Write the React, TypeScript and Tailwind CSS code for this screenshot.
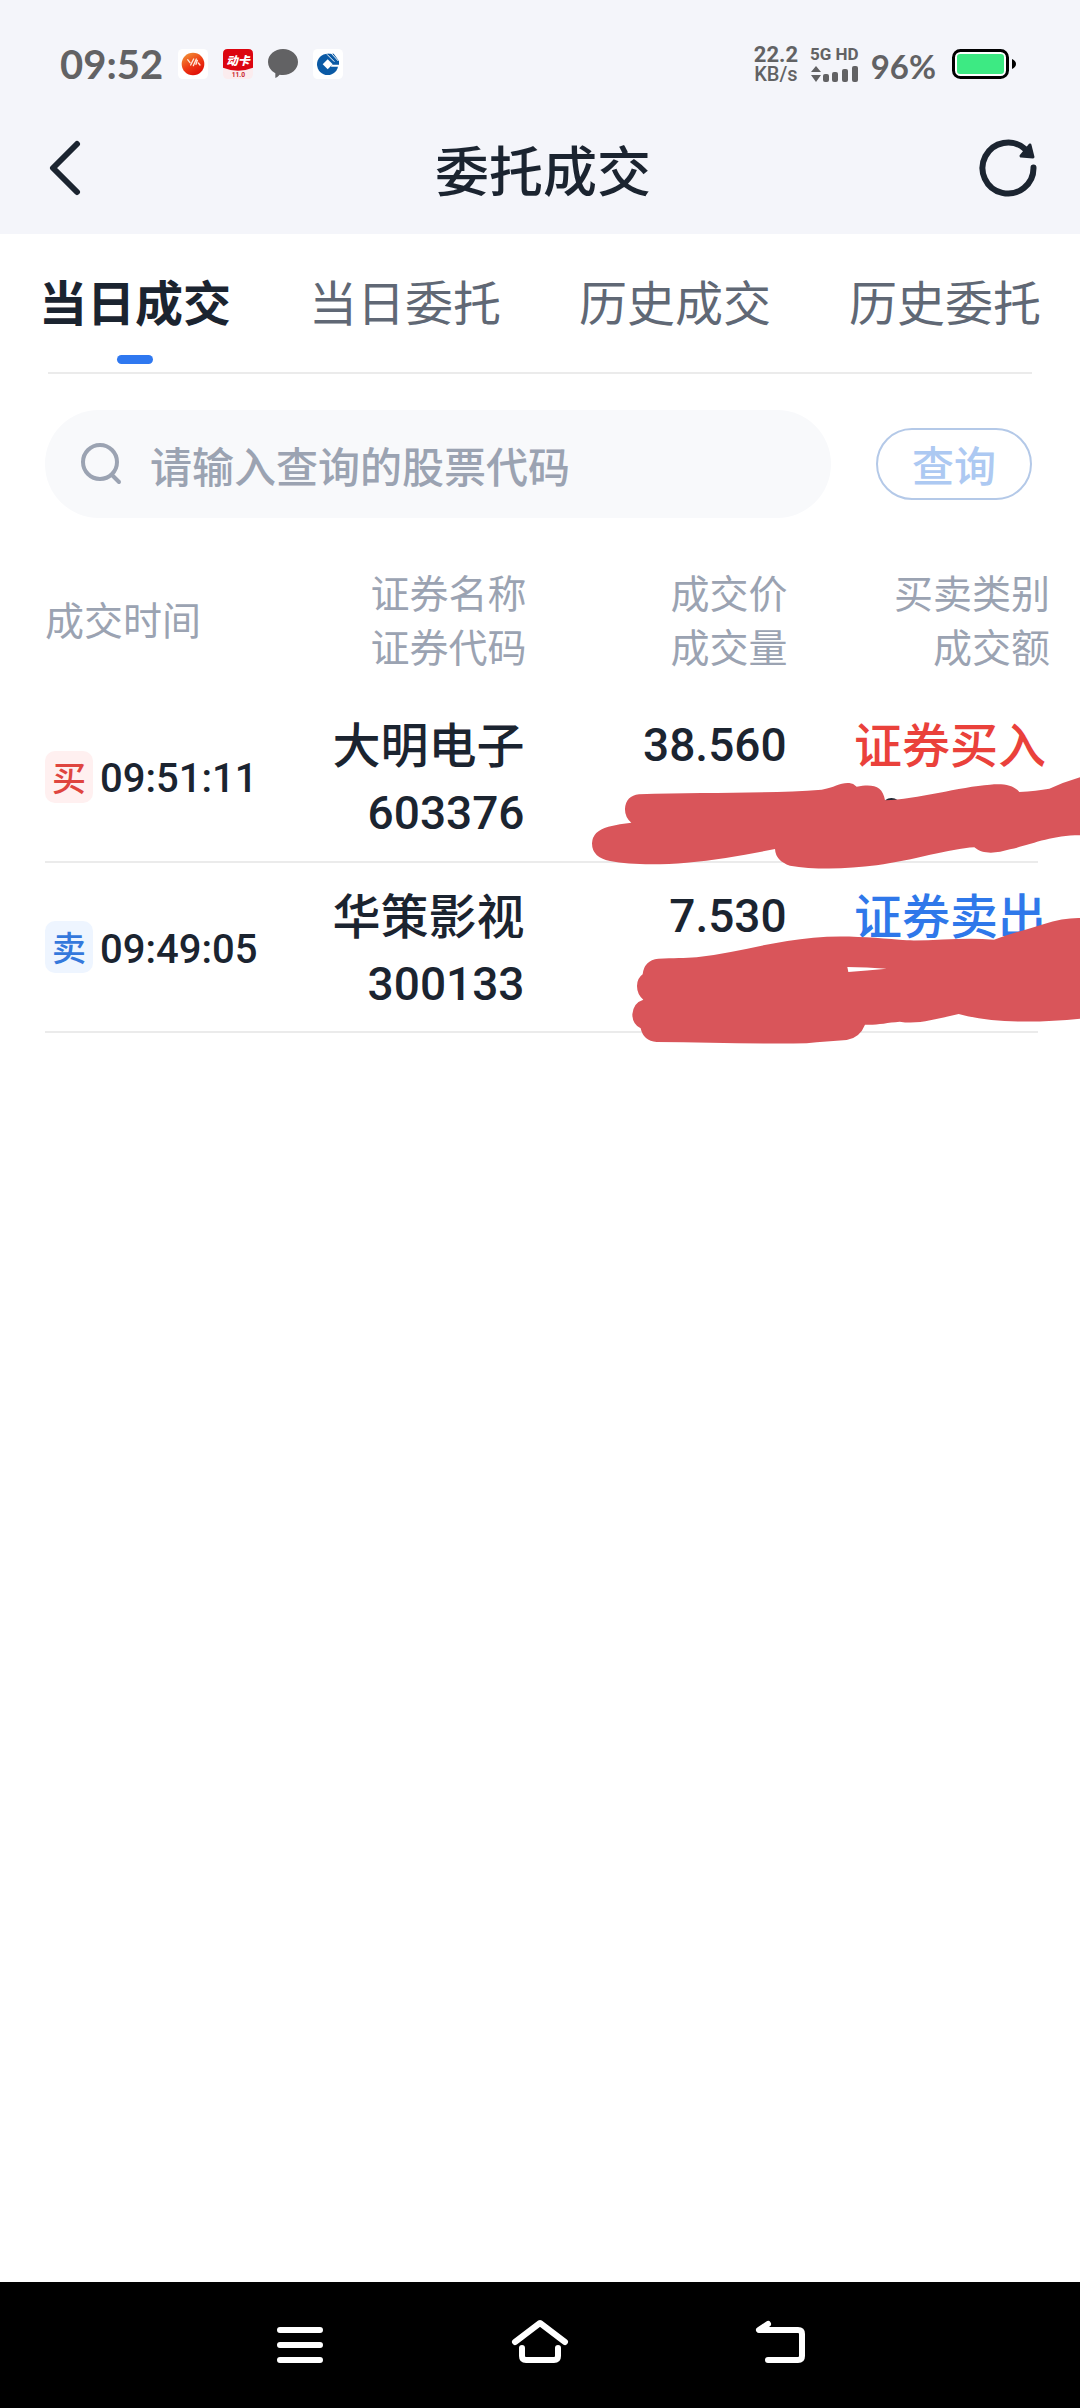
const trades = [
  { side: '买', time: '09:51:11', name: '大明电子', code: '603376', price: '38.560', type: '证券买入', badge: 'bg-[#fff0f0] text-[#df453f]', tone: 'text-[#ea413b]' },
  { side: '卖', time: '09:49:05', name: '华策影视', code: '300133', price: '7.530', type: '证券卖出', badge: 'bg-[#eef5ff] text-[#3478dc]', tone: 'text-[#2f78ea]' },
];

const tabs = ['当日成交', '当日委托', '历史成交', '历史委托'];

function StatusBar() {
  return (
    <div className="flex h-[102px] items-center justify-between pt-[26px] pr-[64px] pl-[60px] text-[#626264]">
      <div className="flex items-center gap-[15px]">
        <span className="font-[Lato] text-[40px] leading-none font-bold">09:52</span>
        <svg className="size-[30px]" viewBox="0 0 90 90">
          <defs>
            <linearGradient id="orb" x1="0" y1="0" x2="0.6" y2="1">
              <stop offset="0" stopColor="#f2a03c" />
              <stop offset="0.6" stopColor="#ee3a14" />
              <stop offset="1" stopColor="#e01008" />
            </linearGradient>
          </defs>
          <rect width="90" height="90" rx="14" fill="#fff" />
          <circle cx="45" cy="45" r="34" fill="url(#orb)" />
          <path d="M29 32l7 9M38 48l9-18M46 50l9-20M58 34l-4 12M61 42l5 6" stroke="#ffe8d8" strokeWidth="4" strokeLinecap="round" fill="none" />
        </svg>
        <svg className="size-[30px]" viewBox="0 0 90 90">
          <rect width="90" height="90" rx="14" fill="#fbecee" />
          <path d="M14 0H76Q90 0 90 14V56Q45 74 0 56V14Q0 0 14 0Z" fill="#dc0510" />
          <text x="45" y="47" textAnchor="middle" fontFamily="Noto Sans CJK SC" fontWeight="900" fontStyle="italic" fontSize="35" fill="#fff">动卡</text>
          <text x="46" y="84" textAnchor="middle" fontFamily="Roboto" fontWeight="700" fontSize="20" fill="#c8242c">11.0</text>
        </svg>
        <svg className="size-[30px]" viewBox="0 0 90 90">
          <path d="M45 0C70 0 90 17 90 39S70 78 45 78Q39 78 35 77Q29 84 22 87V73Q0 61 0 39C0 17 20 0 45 0Z" fill="#626264" />
        </svg>
        <svg className="size-[30px]" viewBox="0 0 90 90">
          <rect width="90" height="90" rx="14" fill="#fff" />
          <circle cx="44" cy="46" r="32" fill="#0b5aa5" />
          <path d="M44 14H62L78 36V48H64Z" fill="#0b5aa5" />
          <path d="M44 31L59 46L44 61L29 46Z" fill="#fff" />
          <path d="M56 47H82V53H54Z" fill="#fff" />
          <path d="M42 16L64 38M54 12L76 36" stroke="#fff" strokeWidth="3" />
        </svg>
      </div>
      <div className="flex items-center gap-[12px]">
        <div className="flex flex-col items-center font-[Roboto]">
          <span className="text-[22px] leading-[20px] font-bold">22.2</span>
          <span className="text-[20px] leading-[18px] font-medium">KB/s</span>
        </div>
        <div className="flex flex-col items-center gap-[3px]">
          <span className="font-[Roboto] text-[17px] leading-[16px] font-bold">5G HD</span>
          <svg className="h-[17px] w-[48px]" viewBox="0 0 48 17" fill="#626264">
            <path d="M6 1L11 7H1ZM6 17L1 10H11Z" />
            <rect x="13" y="9" width="6" height="8" rx="2" />
            <rect x="22" y="7" width="6" height="10" rx="2" />
            <rect x="32" y="4" width="6" height="13" rx="2" />
            <rect x="42" y="1" width="6" height="16" rx="2" />
          </svg>
        </div>
        <span className="pt-[4px] font-[Lato] text-[33px] leading-none font-bold">96%</span>
        <svg className="ml-[4px] h-[30px] w-[64px]" viewBox="0 0 64 30">
          <rect x="1.5" y="1.5" width="54" height="27" rx="7" fill="#fff" stroke="#000" strokeWidth="3" />
          <rect x="5" y="5" width="47" height="20" rx="3" fill="#3dea83" />
          <path d="M60 10Q64 12 64 15T60 20Z" fill="#000" />
        </svg>
      </div>
    </div>
  );
}

function Header() {
  return (
    <header className="flex h-[132px] items-center justify-between pr-[43px] pl-[48px] text-[#1b2430]">
      <button aria-label="返回" className="w-[59px]">
        <svg className="h-[56px] w-[34px]" viewBox="0 0 34 56" fill="none" stroke="currentColor" strokeWidth="6" strokeLinecap="round" strokeLinejoin="round">
          <path d="M29 4L5 28L29 52" />
        </svg>
      </button>
      <h1 className="pt-[2px] text-[54px] leading-none font-medium">委托成交</h1>
      <button aria-label="刷新">
        <svg className="size-[58px]" viewBox="0 0 58 58" fill="none" stroke="currentColor" strokeWidth="6" strokeLinecap="round">
          <path d="M54.5 28.5A25.5 25.5 0 1 1 46 10" />
          <path d="M42 17L54 18L51 6Z" fill="currentColor" strokeWidth="3" strokeLinejoin="round" />
        </svg>
      </button>
    </header>
  );
}

function Redactions() {
  return (
    <svg aria-hidden="true" className="pointer-events-none absolute right-0 bottom-[-18px] h-[360px] w-[520px]" viewBox="0 0 1560 1080">
      <path d="M975 328Q994 314 1014 328L994 345Z" fill="#1b2430" />
      <g fill="#d9555a">
        <path d="M237 310C420 303 620 309 785 296C825 289 840 274 868 276Q880 277 890 287C940 278 968 285 975 328C1070 325 1200 287 1290 281C1330 277 1361 282 1378 303Q1430 300 1468 293Q1510 274 1560 259V433C1470 433 1420 460 1350 475C1310 487 1270 492 1243 469C1170 473 1060 508 950 523C860 535 760 536 690 524Q647 510 645 474C560 491 470 508 380 515C300 522 210 522 150 510Q96 500 96 457Q97 420 145 407Q180 398 214 395Q194 378 195 353Q198 314 237 310Z" />
        <path fillRule="evenodd" d="M295 803C340 801 375 802 410 799C530 785 640 750 760 740C860 731 960 742 1040 748C1130 750 1210 738 1302 746C1350 728 1400 716 1450 700Q1510 680 1560 681V983C1440 995 1300 998 1196 969C1140 980 1080 1002 1019 992C980 995 950 1003 915 1001Q900 1040 860 1047C820 1050 780 1052 740 1057C590 1060 440 1053 290 1053Q250 1050 242 1012Q217 1000 217 970Q220 935 250 926Q231 910 231 885Q231 862 248 850Q252 808 295 803ZM862 828L865 843Q920 838 980 833Q920 828 862 828Z" />
      </g>
    </svg>
  );
}

export default function App() {
  return (
    <div className="flex min-h-screen flex-col overflow-x-hidden bg-white font-['Noto_Sans_CJK_SC',sans-serif] text-[#1b2430]">
      <div className="bg-[#f4f5fa]">
        <StatusBar />
        <Header />
      </div>

      <main className="grow">
        <nav className="grid grid-cols-4">
          {tabs.map((tab, i) => (
            <button key={tab} className="flex flex-col items-center pt-[30px]">
              <span className={i === 0 ? 'text-[48px] leading-[72px] font-bold' : 'text-[48px] leading-[72px] text-[#606875]'}>{tab}</span>
              {i === 0 && <span className="mt-[19px] h-[9px] w-[36px] rounded-full bg-[#2f78f0]" />}
            </button>
          ))}
        </nav>
        <div className="mx-[48px] mt-[8px] h-[2px] bg-[#ebebeb]" />

        <form className="mx-[45px] mt-[36px] flex items-center gap-[45px] pr-[3px]">
          <label className="flex h-[108px] min-w-0 grow items-center gap-[28px] rounded-full bg-[#f8f9fb] px-[35px] text-[#9ba3b2]">
            <svg className="size-[42px] shrink-0" viewBox="0 0 42 42" fill="none" stroke="currentColor" strokeWidth="4" strokeLinecap="round">
              <circle cx="20" cy="19" r="17" />
              <path d="M33 33L39 39" />
            </svg>
            <input aria-label="股票代码" placeholder="请输入查询的股票代码" className="h-[60px] min-w-0 grow bg-transparent text-[42px] font-medium outline-none placeholder:text-[#9ba3b2]" />
          </label>
          <button type="button" className="h-[72px] w-[156px] rounded-full border-2 border-[#b4c9e8] text-[42px] leading-[64px] font-medium text-[#adc9f2]">查询</button>
        </form>

        <div className="relative mt-[46px] pr-[42px] pl-[45px]">
          <table className="w-full table-fixed border-collapse">
            <colgroup>
              <col className="w-[23%]" />
              <col className="w-[27%]" />
              <col className="w-[27%]" />
              <col className="w-[23%]" />
            </colgroup>
            <thead className="text-[39px] leading-[54px] text-[#9ba3b2]">
              <tr className="h-[128px] align-top">
                <th className="pt-[27px] text-left font-normal">成交时间</th>
                <th className="pr-[15px] text-right font-normal">证券名称<br />证券代码</th>
                <th className="pr-[22px] text-right font-normal">成交价<br />成交量</th>
                <th className="text-right font-normal"><div className="mr-[-12px]">买卖类别<br />成交额</div></th>
              </tr>
            </thead>
            <tbody>
              {trades.map((t) => (
                <tr key={t.code} className="h-[170px] border-b-2 border-[#ebebeb] text-right text-[48px] leading-[69px] font-medium">
                  <td>
                    <div className="flex items-center gap-[7px]">
                      <span className={'flex h-[52px] w-[48px] shrink-0 items-center justify-center rounded-[10px] text-[34px] leading-none ' + t.badge}>{t.side}</span>
                      <span className="pt-[5px] font-[Roboto] text-[40px] leading-none">{t.time}</span>
                    </div>
                  </td>
                  <td className="pr-[17px] align-top">
                    <div className="pt-[16px]">{t.name}</div>
                    <div className="pt-[3px] font-[Roboto] text-[46px] leading-[66px]">{t.code}</div>
                  </td>
                  <td className="pr-[23px] align-top">
                    <div className="pt-[19px] font-[Roboto] text-[46px]">{t.price}</div>
                  </td>
                  <td className="align-top">
                    <div className={'mr-[-8px] pt-[16px] whitespace-nowrap ' + t.tone}>{t.type}</div>
                  </td>
                </tr>
              ))}
            </tbody>
          </table>
          <Redactions />
        </div>
      </main>

      <footer className="flex h-[126px] items-center justify-center gap-[180px] bg-black text-white">
        <button aria-label="菜单">
          <svg className="size-[60px]" viewBox="0 0 60 60" fill="none" stroke="currentColor" strokeWidth="6" strokeLinecap="round">
            <path d="M10 15H50M10 30H50M10 45H50" />
          </svg>
        </button>
        <button aria-label="主页">
          <svg className="size-[60px]" viewBox="0 0 60 60" fill="none" stroke="currentColor" strokeWidth="6" strokeLinecap="round" strokeLinejoin="round">
            <path d="M5 27L30 8L55 27M12 33V41Q12 45 16 45H44Q48 45 48 41V33" />
          </svg>
        </button>
        <button aria-label="后退">
          <svg className="size-[60px]" viewBox="0 0 60 60" fill="none" stroke="currentColor" strokeWidth="6" strokeLinecap="round" strokeLinejoin="round">
            <path d="M18 9L9 15H48Q52 15 52 19V41Q52 45 48 45H18" />
          </svg>
        </button>
      </footer>
    </div>
  );
}
